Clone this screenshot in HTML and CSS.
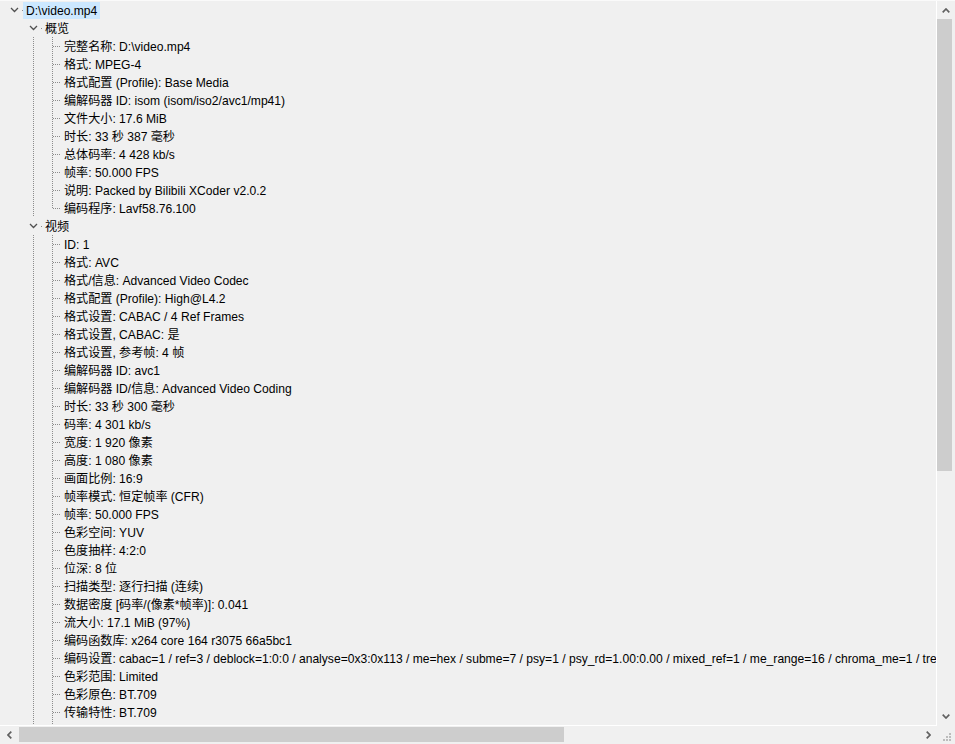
FILE: index.html
```html
<!DOCTYPE html>
<html lang="zh-CN">
<head>
<meta charset="utf-8">
<title>MediaInfo</title>
<link rel="stylesheet" href="styles.css">
</head>
<body>
<div class="window">
  <div class="edge-top"></div>
  <div class="tree">
    <div class="row"><span class="tog"><svg width="9" height="6" viewBox="0 0 9 6"><path d="M1 1 L4.5 4.5 L8 1" fill="none" stroke="#505050" stroke-width="1.3"/></svg></span><span class="label sel">D:\video.mp4</span></div>
    <div class="row"><span class="g"></span><span class="tog"><svg width="9" height="6" viewBox="0 0 9 6"><path d="M1 1 L4.5 4.5 L8 1" fill="none" stroke="#505050" stroke-width="1.3"/></svg></span><span class="label">概览</span></div>
    <div class="row"><span class="g"></span><span class="g v"></span><span class="g t"></span><span class="label">完整名称: D:\video.mp4</span></div>
    <div class="row"><span class="g"></span><span class="g v"></span><span class="g t"></span><span class="label">格式: MPEG-4</span></div>
    <div class="row"><span class="g"></span><span class="g v"></span><span class="g t"></span><span class="label">格式配置 (Profile): Base Media</span></div>
    <div class="row"><span class="g"></span><span class="g v"></span><span class="g t"></span><span class="label">编解码器 ID: isom (isom/iso2/avc1/mp41)</span></div>
    <div class="row"><span class="g"></span><span class="g v"></span><span class="g t"></span><span class="label">文件大小: 17.6 MiB</span></div>
    <div class="row"><span class="g"></span><span class="g v"></span><span class="g t"></span><span class="label">时长: 33 秒 387 毫秒</span></div>
    <div class="row"><span class="g"></span><span class="g v"></span><span class="g t"></span><span class="label">总体码率: 4 428 kb/s</span></div>
    <div class="row"><span class="g"></span><span class="g v"></span><span class="g t"></span><span class="label">帧率: 50.000 FPS</span></div>
    <div class="row"><span class="g"></span><span class="g v"></span><span class="g t"></span><span class="label">说明: Packed by Bilibili XCoder v2.0.2</span></div>
    <div class="row"><span class="g"></span><span class="g v"></span><span class="g e"></span><span class="label">编码程序: Lavf58.76.100</span></div>
    <div class="row"><span class="g"></span><span class="tog"><svg width="9" height="6" viewBox="0 0 9 6"><path d="M1 1 L4.5 4.5 L8 1" fill="none" stroke="#505050" stroke-width="1.3"/></svg></span><span class="label">视频</span></div>
    <div class="row"><span class="g"></span><span class="g v"></span><span class="g t"></span><span class="label">ID: 1</span></div>
    <div class="row"><span class="g"></span><span class="g v"></span><span class="g t"></span><span class="label">格式: AVC</span></div>
    <div class="row"><span class="g"></span><span class="g v"></span><span class="g t"></span><span class="label">格式/信息: Advanced Video Codec</span></div>
    <div class="row"><span class="g"></span><span class="g v"></span><span class="g t"></span><span class="label">格式配置 (Profile): High@L4.2</span></div>
    <div class="row"><span class="g"></span><span class="g v"></span><span class="g t"></span><span class="label">格式设置: CABAC / 4 Ref Frames</span></div>
    <div class="row"><span class="g"></span><span class="g v"></span><span class="g t"></span><span class="label">格式设置, CABAC: 是</span></div>
    <div class="row"><span class="g"></span><span class="g v"></span><span class="g t"></span><span class="label">格式设置, 参考帧: 4 帧</span></div>
    <div class="row"><span class="g"></span><span class="g v"></span><span class="g t"></span><span class="label">编解码器 ID: avc1</span></div>
    <div class="row"><span class="g"></span><span class="g v"></span><span class="g t"></span><span class="label">编解码器 ID/信息: Advanced Video Coding</span></div>
    <div class="row"><span class="g"></span><span class="g v"></span><span class="g t"></span><span class="label">时长: 33 秒 300 毫秒</span></div>
    <div class="row"><span class="g"></span><span class="g v"></span><span class="g t"></span><span class="label">码率: 4 301 kb/s</span></div>
    <div class="row"><span class="g"></span><span class="g v"></span><span class="g t"></span><span class="label">宽度: 1 920 像素</span></div>
    <div class="row"><span class="g"></span><span class="g v"></span><span class="g t"></span><span class="label">高度: 1 080 像素</span></div>
    <div class="row"><span class="g"></span><span class="g v"></span><span class="g t"></span><span class="label">画面比例: 16:9</span></div>
    <div class="row"><span class="g"></span><span class="g v"></span><span class="g t"></span><span class="label">帧率模式: 恒定帧率 (CFR)</span></div>
    <div class="row"><span class="g"></span><span class="g v"></span><span class="g t"></span><span class="label">帧率: 50.000 FPS</span></div>
    <div class="row"><span class="g"></span><span class="g v"></span><span class="g t"></span><span class="label">色彩空间: YUV</span></div>
    <div class="row"><span class="g"></span><span class="g v"></span><span class="g t"></span><span class="label">色度抽样: 4:2:0</span></div>
    <div class="row"><span class="g"></span><span class="g v"></span><span class="g t"></span><span class="label">位深: 8 位</span></div>
    <div class="row"><span class="g"></span><span class="g v"></span><span class="g t"></span><span class="label">扫描类型: 逐行扫描 (连续)</span></div>
    <div class="row"><span class="g"></span><span class="g v"></span><span class="g t"></span><span class="label">数据密度 [码率/(像素*帧率)]: 0.041</span></div>
    <div class="row"><span class="g"></span><span class="g v"></span><span class="g t"></span><span class="label">流大小: 17.1 MiB (97%)</span></div>
    <div class="row"><span class="g"></span><span class="g v"></span><span class="g t"></span><span class="label">编码函数库: x264 core 164 r3075 66a5bc1</span></div>
    <div class="row"><span class="g"></span><span class="g v"></span><span class="g t"></span><span class="label">编码设置: cabac=1 / ref=3 / deblock=1:0:0 / analyse=0x3:0x113 / me=hex / subme=7 / psy=1 / psy_rd=1.00:0.00 / mixed_ref=1 / me_range=16 / chroma_me=1 / trellis=1</span></div>
    <div class="row"><span class="g"></span><span class="g v"></span><span class="g t"></span><span class="label">色彩范围: Limited</span></div>
    <div class="row"><span class="g"></span><span class="g v"></span><span class="g t"></span><span class="label">色彩原色: BT.709</span></div>
    <div class="row"><span class="g"></span><span class="g v"></span><span class="g t"></span><span class="label">传输特性: BT.709</span></div>
    <div class="row"><span class="g"></span><span class="g v"></span><span class="g t"></span></div>
  </div>
  <div class="vsep"></div>
  <div class="vscroll">
    <div class="btn"><svg width="8" height="5" viewBox="0 0 8 5"><path d="M0.7 4.3 L4 1 L7.3 4.3" fill="none" stroke="#606060" stroke-width="1.7"/></svg></div>
    <div class="vthumb"></div>
    <div></div>
    <div class="btn"><svg width="8" height="5" viewBox="0 0 8 5"><path d="M0.7 0.7 L4 4 L7.3 0.7" fill="none" stroke="#606060" stroke-width="1.7"/></svg></div>
  </div>
  <div class="hsep"></div>
  <div class="hscroll">
    <div class="btn"><svg width="5" height="8" viewBox="0 0 5 8"><path d="M4.3 0.7 L1 4 L4.3 7.3" fill="none" stroke="#606060" stroke-width="1.7"/></svg></div>
    <div class="hthumb"></div>
    <div></div>
    <div class="btn"><svg width="5" height="8" viewBox="0 0 5 8"><path d="M0.7 0.7 L4 4 L0.7 7.3" fill="none" stroke="#606060" stroke-width="1.7"/></svg></div>
  </div>
  <div class="corner"><svg width="9" height="9" viewBox="0 0 9 9"><rect x="7" y="1" width="2" height="2" fill="#bcbcbc"/><rect x="4" y="4" width="2" height="2" fill="#bcbcbc"/><rect x="7" y="4" width="2" height="2" fill="#bcbcbc"/><rect x="1" y="7" width="2" height="2" fill="#bcbcbc"/><rect x="4" y="7" width="2" height="2" fill="#bcbcbc"/><rect x="7" y="7" width="2" height="2" fill="#bcbcbc"/></svg></div>
</div>
</body>
</html>
```
FILE: styles.css
```css
* { box-sizing: border-box; }
html, body { margin: 0; padding: 0; }
body {
  background: #f0f0f0;
  font-family: "Liberation Sans", "Noto Sans CJK SC", sans-serif;
  font-size: 12px;
  color: #000;
}
.window {
  width: 955px;
  height: 744px;
  display: grid;
  grid-template-columns: 936px 1px 18px;
  grid-template-rows: 1px 724px 1px 18px;
  overflow: hidden;
  background: #f0f0f0;
}
.edge-top { grid-row: 1; grid-column: 1 / 4; background: #fafafa; }
.tree {
  grid-row: 2;
  grid-column: 1;
  overflow: hidden;
  padding-left: 4px;
  white-space: nowrap;
}
.row {
  display: flex;
  height: 18px;
  align-items: flex-start;
  overflow: hidden;
}
.g, .tog {
  flex: none;
  width: 19px;
  height: 18px;
}
.tog {
  display: flex;
  align-items: center;
  justify-content: center;
  padding-bottom: 1px;
  padding-left: 1px;
  background: linear-gradient(#8c8c8c, #8c8c8c) 18px 9px / 1px 1px no-repeat;
}
.g.v {
  background: repeating-linear-gradient(to bottom, #8c8c8c 0 1px, transparent 1px 2px) 10px 0 / 1px 18px no-repeat;
}
.g.t {
  background:
    repeating-linear-gradient(to bottom, #8c8c8c 0 1px, transparent 1px 2px) 10px 0 / 1px 18px no-repeat,
    repeating-linear-gradient(to right, #8c8c8c 0 1px, transparent 1px 2px) 11px 9px / 8px 1px no-repeat;
}
.g.e {
  background:
    repeating-linear-gradient(to bottom, #8c8c8c 0 1px, transparent 1px 2px) 10px 0 / 1px 10px no-repeat,
    repeating-linear-gradient(to right, #8c8c8c 0 1px, transparent 1px 2px) 11px 9px / 8px 1px no-repeat;
}
.label {
  padding: 1px 3px 0 3px;
  line-height: 18px;
  font-size: 12.1px;
}
.label.sel {
  background: #cce8ff;
  margin-top: 1px;
  height: 17px;
  padding-top: 1px;
  line-height: 16px;
}
.vsep { grid-row: 2 / 4; grid-column: 2; background: #fff; }
.hsep { grid-row: 3; grid-column: 1; background: #fff; }
.vscroll {
  grid-row: 2;
  grid-column: 3;
  display: grid;
  grid-template-rows: 18px 452px 1fr 18px;
}
.vthumb { width: 15px; background: #cdcdcd; }
.hscroll {
  grid-row: 4;
  grid-column: 1 / 3;
  display: grid;
  grid-template-columns: 19px 545px 1fr 18px;
}
.hthumb { height: 15px; margin-top: 1px; background: #cdcdcd; }
.btn { display: flex; align-items: center; justify-content: center; }
.corner {
  grid-row: 3 / 5;
  grid-column: 3;
  display: flex;
  align-items: flex-end;
  justify-content: flex-end;
  padding: 0 4px 3px 0;
}
```
